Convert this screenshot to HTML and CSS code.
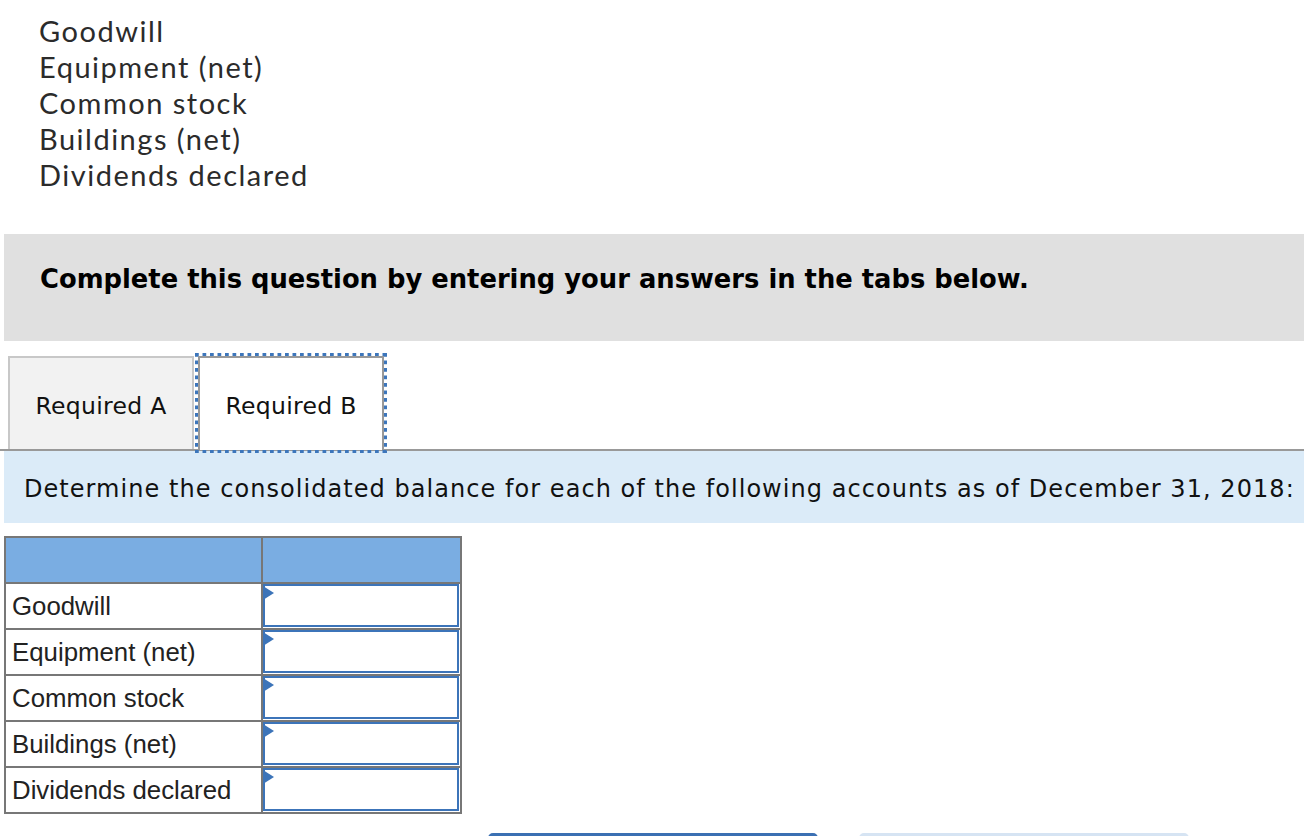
FILE: index.html
```html
<!DOCTYPE html>
<html lang="en">
<head>
<meta charset="utf-8">
<title>Consolidated balances</title>
<link rel="stylesheet" href="styles.css">
</head>
<body>
<ul class="account-list">
  <li>Goodwill</li>
  <li>Equipment (net)</li>
  <li>Common stock</li>
  <li>Buildings (net)</li>
  <li>Dividends declared</li>
</ul>

<div class="instructions">Complete this question by entering your answers in the tabs below.</div>

<div class="tabs">
  <div class="tab tab-inactive">Required A</div>
  <div class="tab tab-active">Required B</div>
</div>

<div class="prompt">Determine the consolidated balance for each of the following accounts as of December 31, 2018:</div>

<table class="answer-table">
  <tr class="head-row"><td class="col-label"></td><td class="col-value"></td></tr>
  <tr><td class="col-label">Goodwill</td><td class="col-value"><span class="flag"></span><input class="answer" type="text"></td></tr>
  <tr><td class="col-label">Equipment (net)</td><td class="col-value"><span class="flag"></span><input class="answer" type="text"></td></tr>
  <tr><td class="col-label">Common stock</td><td class="col-value"><span class="flag"></span><input class="answer" type="text"></td></tr>
  <tr><td class="col-label">Buildings (net)</td><td class="col-value"><span class="flag"></span><input class="answer" type="text"></td></tr>
  <tr><td class="col-label">Dividends declared</td><td class="col-value"><span class="flag"></span><input class="answer" type="text"></td></tr>
</table>

<div class="buttons">
  <button class="btn btn-primary" type="button"></button>
  <button class="btn btn-secondary" type="button"></button>
</div>
</body>
</html>
```

FILE: styles.css
```css
html, body {
  margin: 0;
  padding: 0;
  background: #ffffff;
  overflow: hidden;
}

body {
  width: 1304px;
  height: 836px;
}

.account-list {
  list-style: none;
  margin: 0;
  padding: 13px 0 0 39px;
  font-family: Lato, "Open Sans", sans-serif;
  font-size: 29px;
  line-height: 36px;
  letter-spacing: 1.5px;
  color: #2b2b2b;
}

.instructions {
  margin: 41px 0 0 4px;
  padding: 30px 0 47px 36px;
  background: #e0e0e0;
  font-family: "DejaVu Sans", Verdana, sans-serif;
  font-weight: bold;
  font-size: 25.8px;
  line-height: 30px;
  color: #000000;
}

.tabs {
  display: flex;
  gap: 4px;
  margin-top: 15px;
  padding-left: 8px;
  border-bottom: 2px solid #999999;
}

.tab {
  box-sizing: border-box;
  width: 186px;
  height: 93px;
  padding-top: 35px;
  text-align: center;
  font-family: "DejaVu Sans", Verdana, sans-serif;
  font-size: 23.5px;
  line-height: 26px;
  letter-spacing: 0.3px;
  color: #111111;
}

.tab-inactive {
  background: #f2f2f2;
  border: 2px solid #c8c8c8;
  border-bottom: none;
}

.tab-active {
  background: #ffffff;
  border: 2px solid #999999;
  border-bottom: none;
  height: 94px;
  margin-bottom: -1px;
  position: relative;
}

.tab-active::before {
  content: "";
  position: absolute;
  top: -5px;
  left: -5px;
  right: -5px;
  bottom: -3px;
  pointer-events: none;
  background:
    linear-gradient(to right, #3d76bb 48%, transparent 48%) left top / 7.5px 3px repeat-x,
    linear-gradient(to right, #3d76bb 48%, transparent 48%) left bottom / 7.5px 3px repeat-x,
    linear-gradient(to bottom, #3d76bb 48%, transparent 48%) left top / 3px 7.5px repeat-y,
    linear-gradient(to bottom, #3d76bb 48%, transparent 48%) right top / 3px 7.5px repeat-y;
}

.prompt {
  margin-left: 4px;
  padding: 24px 0 20px 20px;
  background: #dbebf8;
  font-family: "DejaVu Sans", Verdana, sans-serif;
  font-size: 24px;
  line-height: 28px;
  letter-spacing: 1.05px;
  color: #111111;
  white-space: nowrap;
}

.answer-table {
  margin: 13px 0 0 4px;
  border-collapse: separate;
  border-spacing: 2px;
  background: #777777;
}

.answer-table td {
  padding: 0;
  height: 44px;
  background: #ffffff;
  vertical-align: middle;
}

.head-row td {
  background: #7aade2;
}

.col-label {
  box-sizing: border-box;
  width: 255px;
  padding-left: 6px !important;
  font-family: "Liberation Sans", Arial, sans-serif;
  font-size: 25.8px;
  color: #222222;
  white-space: nowrap;
}

.col-value {
  width: 197px;
  position: relative;
  vertical-align: top !important;
}

.answer {
  display: block;
  box-sizing: border-box;
  width: 196px;
  height: 43px;
  margin: 0;
  padding: 0 8px;
  border: 2px solid #3c74b9;
  border-radius: 0;
  background: #ffffff;
  font-family: "Liberation Sans", Arial, sans-serif;
  font-size: 22px;
  outline: none;
}

.flag {
  position: absolute;
  left: 0;
  top: 2px;
  width: 0;
  height: 0;
  border-left: 11px solid #3c74b9;
  border-top: 7px solid transparent;
  border-bottom: 7px solid transparent;
}

.buttons {
  display: flex;
  gap: 41px;
  margin-top: 19px;
  padding-left: 488px;
}

.btn {
  width: 330px;
  height: 40px;
  border: none;
  border-radius: 5px;
  padding: 0;
}

.btn-primary {
  background: #3b70b3;
}

.btn-secondary {
  background: #d6e4f3;
}
```
